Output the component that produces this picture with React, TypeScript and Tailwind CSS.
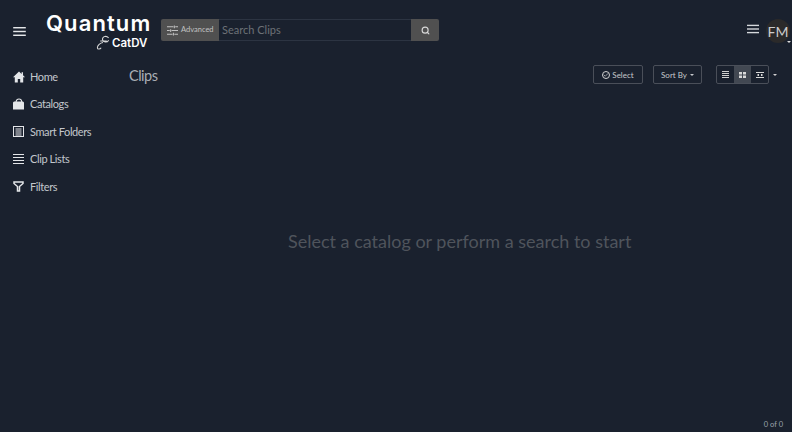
import { Search, Check } from 'lucide-react';
import type { ReactNode } from 'react';

function MenuIcon({ className }: { className: string }) {
  return (
    <svg viewBox="0 0 14 10" className={className} fill="currentColor">
      <rect x="0" y="0" width="14" height="1.6" />
      <rect x="0" y="4.2" width="14" height="1.6" />
      <rect x="0" y="8.4" width="14" height="1.6" />
    </svg>
  );
}

function SlidersIcon() {
  return (
    <svg viewBox="0 0 12 12" className="h-[11px] w-[11px] text-[#c2c2c2]" stroke="currentColor" fill="none" strokeWidth="1.1">
      <path d="M0 2h7M9 2h3M8 .5v3M0 6h3M5 6h7M4 4.5v3M0 10h6M8 10h4M7 8.5v3" />
    </svg>
  );
}

function NavItem({ icon, label }: { icon: ReactNode; label: string }) {
  return (
    <div className="flex h-[27.5px] items-center">
      <span className="flex w-[17px] justify-start text-[#e4e6e9]">{icon}</span>
      <span className="text-[11px] tracking-[-0.4px] text-[#c3c7cc]">{label}</span>
    </div>
  );
}

const navItems = [
  {
    label: 'Home',
    icon: (
      <svg viewBox="0 0 12 12" className="h-3 w-3" fill="currentColor">
        <path d="M6 .5 0 6.2h1.8V11.5h3V8h2.4v3.5h3V6.2H12L10 4.3V1.2H8.6v1.8z" />
      </svg>
    ),
  },
  {
    label: 'Catalogs',
    icon: (
      <svg viewBox="0 0 11 12" className="h-3 w-[11px]" fill="currentColor">
        <path d="M0 4.5 1 3.5h1.5C3 1.5 4 .5 6 .5S9 1.5 9.3 3.5H10l1 1v7H0zM3.6 3.5h4.6C8 2.2 7.2 1.5 6 1.5S4 2.2 3.6 3.5z" />
      </svg>
    ),
  },
  {
    label: 'Smart Folders',
    icon: (
      <svg viewBox="0 0 11 11" className="h-[11px] w-[11px]" fill="none" stroke="currentColor">
        <rect x="0.5" y="0.5" width="10" height="10" strokeWidth="1" />
        <path d="M2.5 3h6M2.5 5h6M2.5 7h6M2.5 9h6" strokeWidth="1" />
      </svg>
    ),
  },
  {
    label: 'Clip Lists',
    icon: (
      <svg viewBox="0 0 11 10" className="h-[10px] w-[11px]" fill="currentColor">
        <rect y="0" width="11" height="1" />
        <rect y="3" width="11" height="1" />
        <rect y="6" width="11" height="1" />
        <rect y="9" width="11" height="1" />
      </svg>
    ),
  },
  {
    label: 'Filters',
    icon: (
      <svg viewBox="0 0 11 11" className="h-[11px] w-[11px]" fill="none" stroke="currentColor" strokeWidth="1.5">
        <path d="M1 1h9v1.5L6.5 5.5v4.5h-2V5.5L1 2.5z" />
      </svg>
    ),
  },
];

export default function App() {
  return (
    <div className="flex h-[432px] w-[792px] flex-col overflow-hidden bg-[#1a212e] font-['Lato',sans-serif]">
      {/* Top bar */}
      <div className="flex h-[58px] shrink-0 items-start">
        <div className="mt-[27px] ml-[13px] w-[33px] text-[#e4e6e9]">
          <MenuIcon className="h-[9px] w-[13px]" />
        </div>
        <div className="mt-[11px] flex w-[115px] flex-col items-start">
          <span className="font-['Inter',sans-serif] text-[22px] leading-[24px] font-semibold tracking-[1.1px] text-white">
            Quantum
          </span>
          <div className="ml-[50px] flex items-center">
            <svg viewBox="0 0 14 16" className="h-[15px] w-[14px] text-[#d9d9d9]" fill="none" stroke="currentColor" strokeWidth="1.1">
              <path d="M13 3C10 0 6 2 6.500 5s5 3.500 6.500 .5M4 6.500h7M7 8C4 8.500 1 11 1 13.500c0 2 3 2 4 0" />
            </svg>
            <span className="ml-[2px] font-['Inter',sans-serif] text-[11.5px] leading-[14px] font-semibold text-white">
              CatDV
            </span>
          </div>
        </div>
        <div className="mt-[19px] flex h-[22px] w-[278px] overflow-hidden rounded-[2px]">
          <div className="flex w-[58px] items-center gap-[3px] bg-[#505050] pl-[6px]">
            <SlidersIcon />
            <span className="text-[7.5px] text-[#c2c2c2]">Advanced</span>
          </div>
          <div className="flex flex-1 items-center border-y border-[#2c3442] bg-[#1a212e] pl-[3px] text-[11px] text-[#6d7177]">
            Search Clips
          </div>
          <div className="flex w-[28px] items-center justify-center bg-[#505050] text-[#d8d8d8]">
            <Search size={9} strokeWidth={3} />
          </div>
        </div>
        <div className="mt-[24px] ml-[308px] text-[#d5d8dc]">
          <MenuIcon className="h-[10px] w-[12px]" />
        </div>
        <div className="relative mt-[19px] ml-[7px] flex h-[24px] w-[24px] items-center justify-center rounded-full bg-[#2b2a2a] text-[14px] text-[#ccc]">
          FM
          <span className="absolute right-[-1px] bottom-[0px] border-x-[2px] border-t-[2px] border-x-transparent border-t-[#ddd]" />
        </div>
      </div>

      <div className="flex min-h-0 flex-1">
        {/* Sidebar */}
        <div className="w-[129px] shrink-0 pt-[5px] pl-[13px]">
          {navItems.map((item) => (
            <NavItem key={item.label} icon={item.icon} label={item.label} />
          ))}
        </div>

        {/* Main */}
        <div className="flex min-w-0 flex-1 flex-col">
          <div className="flex items-start pt-[6px]">
            <span className="text-[14.5px] leading-[24px] tracking-[-0.5px] text-[#a9aeb5]">Clips</span>
            <div className="ml-auto flex items-center pt-[1px] pr-[15px]">
              <div className="flex h-[19px] w-[50px] items-center justify-center gap-[2px] rounded-[2px] border border-[#4a4f59] text-[8px] text-[#c5c8cc]">
                <span className="flex h-[8px] w-[8px] items-center justify-center rounded-full border border-[#d0d0d0]">
                  <Check size={6} strokeWidth={3} />
                </span>
                Select
              </div>
              <div className="ml-[10px] flex h-[19px] w-[49px] items-center justify-center gap-[3px] rounded-[2px] border border-[#4a4f59] text-[8px] text-[#c5c8cc]">
                Sort By
                <span className="border-x-[2.5px] border-t-[2.5px] border-x-transparent border-t-[#c5c8cc]" />
              </div>
              <div className="ml-[14px] flex h-[19px] w-[53px] overflow-hidden rounded-[2px] border border-[#4a4f59]">
                <div className="flex flex-1 items-center justify-center text-[#d0d0d0]">
                  <svg viewBox="0 0 7 7" className="h-[7px] w-[7px]" fill="currentColor">
                    <rect y="0" width="7" height="1" />
                    <rect y="2" width="7" height="1" />
                    <rect y="4" width="7" height="1" />
                    <rect y="6" width="7" height="1" />
                  </svg>
                </div>
                <div className="flex flex-1 items-center justify-center bg-[#424852]">
                  <svg viewBox="0 0 7 6" className="h-[6px] w-[7px]" fill="#d8d8d8">
                    <rect width="3" height="2.5" />
                    <rect x="4" width="3" height="2.5" />
                    <rect y="3.5" width="3" height="2.5" />
                    <rect x="4" y="3.5" width="3" height="2.5" />
                  </svg>
                </div>
                <div className="flex flex-1 items-center justify-center">
                  <svg viewBox="0 0 8 6" className="h-[6px] w-[8px]" fill="#d8d8d8">
                    <rect width="8" height="1" />
                    <rect x="1.5" y="2" width="1.5" height="2" />
                    <rect x="5" y="2" width="1.5" height="2" />
                    <rect y="5" width="8" height="1" />
                  </svg>
                </div>
              </div>
              <span className="mt-[1px] ml-[4px] border-x-[2.5px] border-t-[2.5px] border-x-transparent border-t-[#d0d0d0]" />
            </div>
          </div>

          <div className="flex flex-1 items-start pt-[141px] pl-[159px]">
            <span className="text-[18px] leading-[25px] text-[#4f545c]">Select a catalog or perform a search to start</span>
          </div>
          <div className="flex justify-end pr-[9px] pb-[2px] text-[7.5px] leading-[10px] text-[#9aa3ad]">0 of 0</div>
        </div>
      </div>
    </div>
  );
}
